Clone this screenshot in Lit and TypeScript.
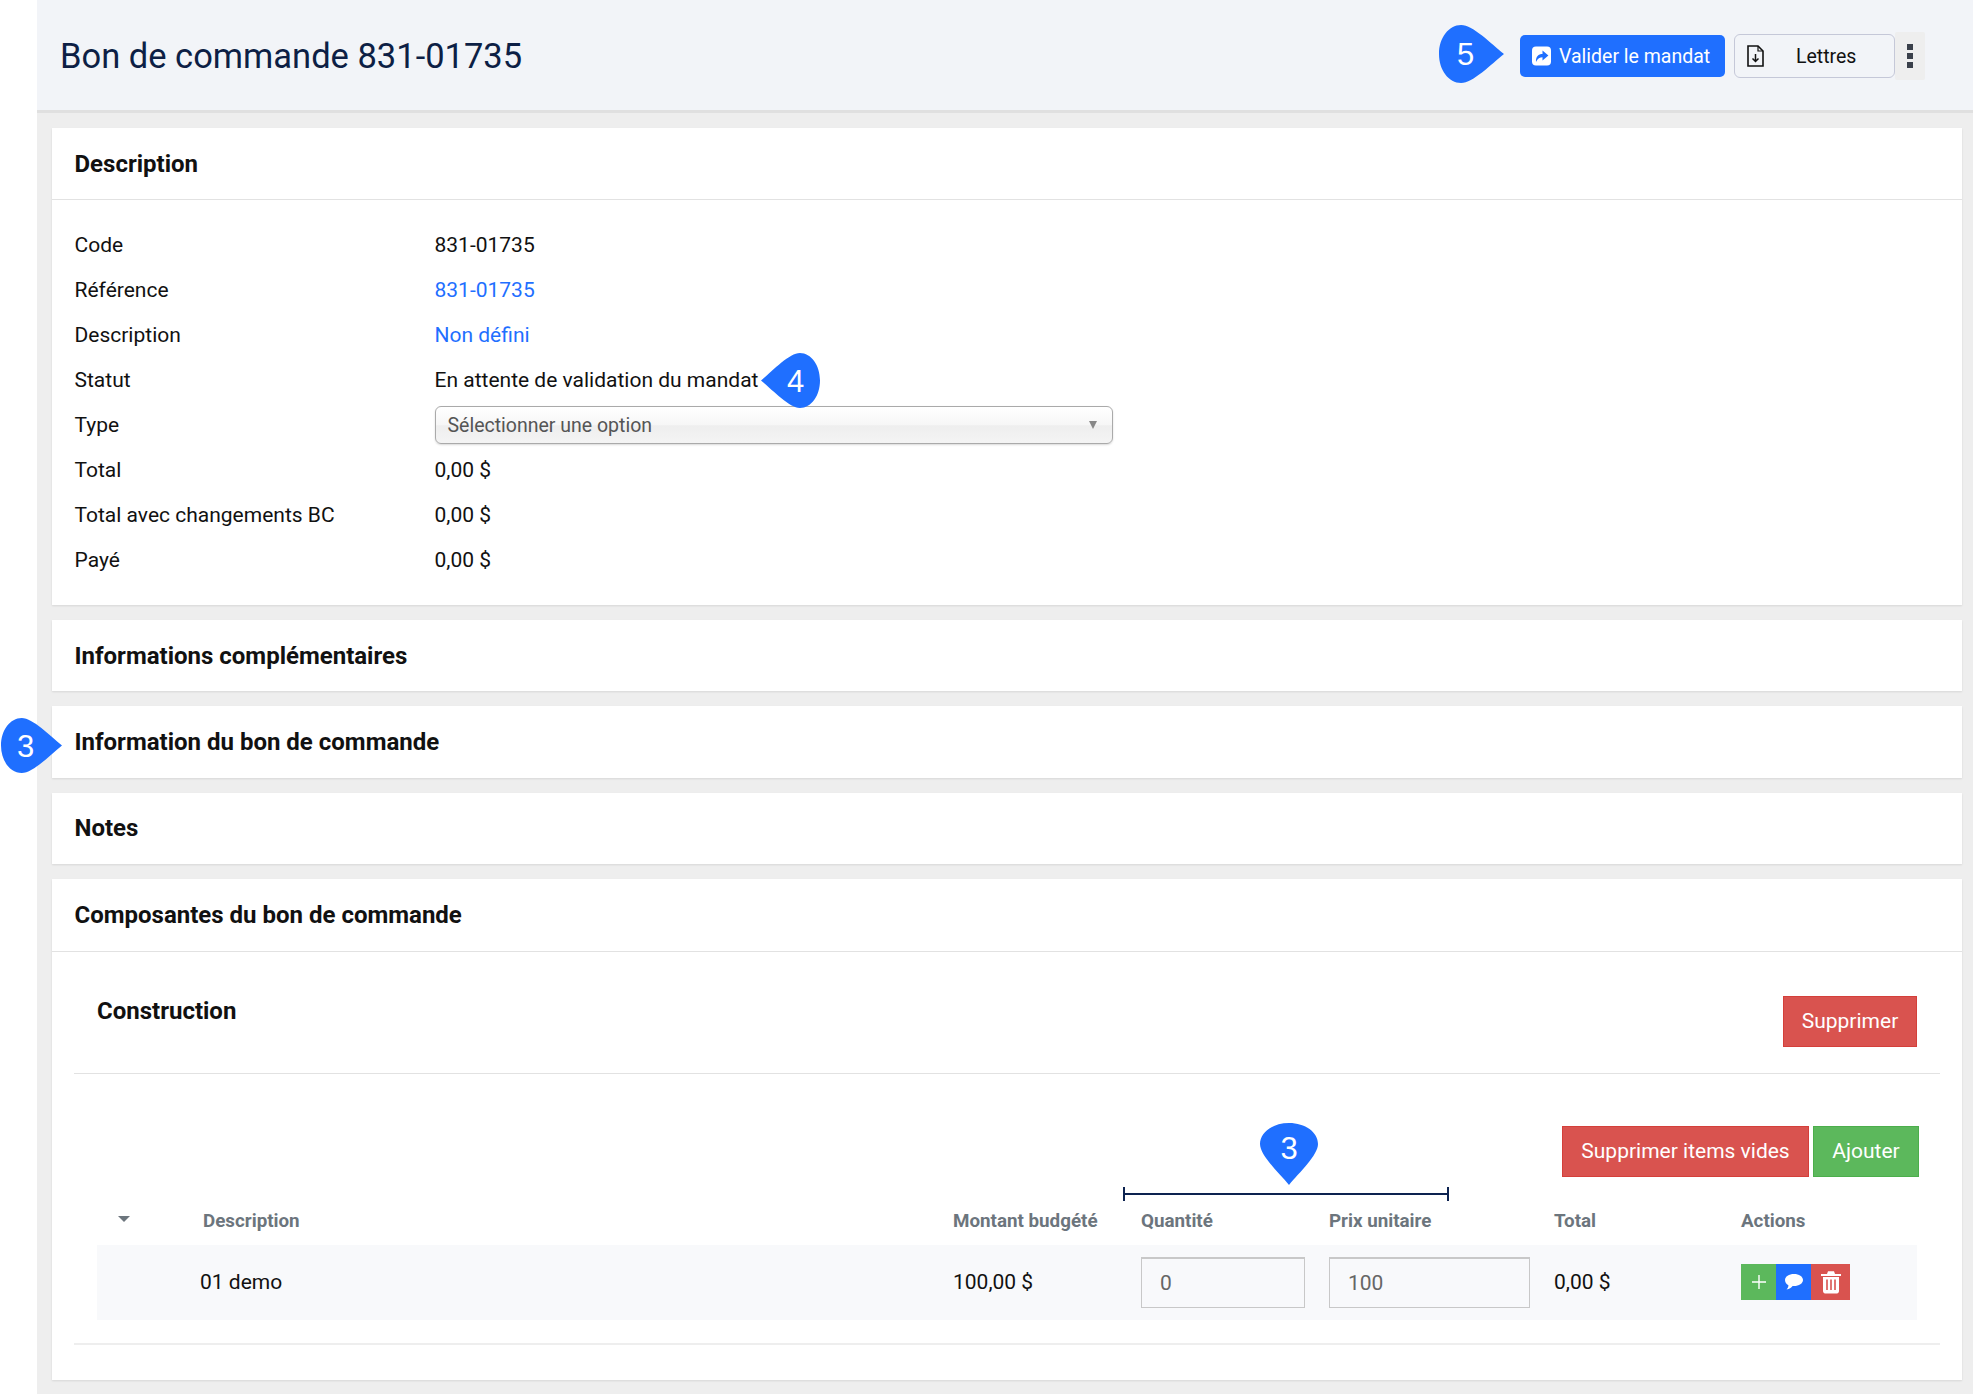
import { LitElement, html, css, svg } from 'lit';
import { customElement } from 'lit/decorators.js';

const DETAILS = [
  { label: 'Code', value: '831-01735' },
  { label: 'Référence', value: '831-01735', link: true },
  { label: 'Description', value: 'Non défini', link: true },
  { label: 'Statut', value: 'En attente de validation du mandat' },
  { label: 'Type', select: true },
  { label: 'Total', value: '0,00 $' },
  { label: 'Total avec changements BC', value: '0,00 $' },
  { label: 'Payé', value: '0,00 $' },
];

// teardrop marker, drawn pointing down and rotated for each annotation
const PIN_PATH = 'M50 0C78 0 100 15 100 34C100 52 68 80 50 100C32 80 0 52 0 34C0 15 22 0 50 0Z';

const pin = (cls: string, n: string, rotate: number) => html`
  <div class="pin ${cls}">
    <svg viewBox="0 0 100 100" preserveAspectRatio="none">
      ${svg`<path d=${PIN_PATH} transform="rotate(${rotate} 50 50)" fill="#1f6fff"></path>`}
    </svg>
    <span>${n}</span>
  </div>
`;

@customElement('app-root')
export class AppRoot extends LitElement {
  static styles = css`
    :host {
      display: block;
      position: relative;
      width: 1973px;
      height: 1394px;
      overflow: hidden;
      background: #fff;
      font-family: Roboto, 'Liberation Sans', sans-serif;
      font-size: 21px;
      color: #111;
    }

    .main {
      margin-left: 37px;
      height: 1394px;
      background: #eeeeee;
    }

    .topbar {
      display: flex;
      align-items: center;
      justify-content: space-between;
      height: 108px;
      padding: 2px 48px 0 23px;
      background: #f2f4f8;
      border-bottom: 3px solid #e0e0e0;
    }

    .topbar h1 {
      margin: 0;
      font-size: 34.5px;
      font-weight: 400;
      color: #0d1f45;
    }

    .top-actions {
      display: flex;
      align-items: center;
      font-size: 19.5px;
    }

    .btn-validate {
      display: flex;
      align-items: center;
      gap: 8px;
      width: 205px;
      height: 42px;
      box-sizing: border-box;
      padding-left: 12px;
      margin-right: 9px;
      border-radius: 5px;
      background: #1f6fff;
      color: #fff;
      white-space: nowrap;
    }

    .btn-letters {
      display: flex;
      align-items: center;
      width: 161px;
      height: 44px;
      box-sizing: border-box;
      padding-left: 11px;
      border: 1px solid #c5c8d8;
      border-radius: 6px;
      color: #111;
    }

    .btn-letters span {
      margin-left: 31px;
    }

    .btn-more {
      display: flex;
      flex-direction: column;
      align-items: center;
      justify-content: center;
      gap: 3px;
      width: 30px;
      height: 48px;
      background: #eeeeee;
      border-radius: 2px;
    }

    .btn-more i {
      width: 6px;
      height: 6px;
      background: #3a3f4a;
    }

    .content {
      display: flex;
      flex-direction: column;
      gap: 15px;
      padding: 15px 11px 0 15px;
    }

    .card {
      background: #fff;
      box-shadow: 0 1px 2px rgba(0, 0, 0, 0.1);
    }

    .card-title {
      display: flex;
      align-items: center;
      height: 71.4px;
      padding-left: 22.5px;
      font-size: 24px;
      font-weight: 700;
      color: #111;
    }

    .card-title.ruled {
      border-bottom: 1px solid #e2e2e2;
    }

    .details {
      padding: 22px 22.5px 22.6px;
    }

    .detail {
      display: grid;
      grid-template-columns: 360px 678px;
      align-items: center;
      height: 45px;
    }

    .link {
      color: #1f6fff;
    }

    .select {
      display: flex;
      align-items: center;
      justify-content: space-between;
      height: 38px;
      margin-top: 1px;
      box-sizing: border-box;
      padding: 0 15px 0 12px;
      border: 1px solid #aaa;
      border-radius: 6px;
      background: linear-gradient(#ffffff 0%, #f6f6f6 50%, #eeeeee 52%, #f4f4f4 100%);
      box-shadow: 0 1px 2px rgba(0, 0, 0, 0.15);
      font-size: 19.5px;
      color: #555;
    }

    .select i {
      width: 0;
      height: 0;
      border-left: 4.5px solid transparent;
      border-right: 4.5px solid transparent;
      border-top: 8px solid #888;
    }

    .components {
      padding: 0 22px;
    }

    .group-head {
      display: flex;
      justify-content: space-between;
      align-items: flex-start;
      padding: 44px 23px 26px 23px;
      border-bottom: 1px solid #e2e2e2;
    }

    .group-head h2 {
      margin: 0;
      font-size: 24px;
      font-weight: 700;
      line-height: 30px;
    }

    .btn {
      display: flex;
      align-items: center;
      justify-content: center;
      height: 51px;
      box-sizing: border-box;
      color: #fff;
      white-space: nowrap;
    }

    .btn.red {
      background: #d9534f;
      border: 1px solid #d43f3a;
    }

    .btn.green {
      background: #5cb85c;
      border: 1px solid #4cae4c;
    }

    .btn.delete {
      width: 134px;
    }

    .group-body {
      padding: 52px 23px 23px 23px;
      border-bottom: 2px solid #eeeeee;
    }

    .table-actions {
      display: flex;
      justify-content: flex-end;
      gap: 4px;
      margin-right: -2px;
    }

    .table-actions .wide {
      width: 247px;
    }

    .table-actions .narrow {
      width: 106px;
    }

    .thead,
    .row {
      display: grid;
      grid-template-columns: 103px 753px 188px 188px 225px 187px 176px;
      align-items: center;
    }

    .thead {
      height: 68px;
      padding-top: 20px;
      box-sizing: border-box;
      font-size: 18.8px;
      font-weight: 700;
      color: #6c757d;
    }

    .thead .desc {
      padding-left: 3px;
    }

    .caret {
      width: 0;
      height: 0;
      margin: 0 0 3px 21px;
      border-left: 6px solid transparent;
      border-right: 6px solid transparent;
      border-top: 6px solid #6c757d;
    }

    .row {
      height: 75px;
      background: #f8f9fb;
    }

    .field {
      display: flex;
      align-items: center;
      width: calc(100% - 24px);
      height: 51px;
      box-sizing: border-box;
      padding-left: 18px;
      border: 1px solid #c8c8c8;
      border-top-width: 2px;
      color: #666;
    }

    .row-actions {
      display: flex;
      height: 36px;
    }

    .row-actions div {
      display: flex;
      align-items: center;
      justify-content: center;
      width: 35px;
    }

    .row-actions .add {
      background: #5cb85c;
    }

    .row-actions .chat {
      background: #1f6fff;
    }

    .row-actions .trash {
      width: 39px;
      background: #d9534f;
    }

    .foot {
      height: 35px;
    }

    /* annotations sitting on top of the page */
    .pin {
      position: absolute;
      display: flex;
      align-items: center;
      justify-content: center;
      font-family: 'Liberation Sans', Arial, sans-serif;
      font-size: 31px;
      color: #fff;
    }

    .pin svg {
      position: absolute;
      inset: 0;
      width: 100%;
      height: 100%;
    }

    .pin span {
      position: relative;
    }

    .pin-5 {
      left: 1439px;
      top: 25px;
      width: 65px;
      height: 58px;
    }

    .pin-5 span {
      left: -6px;
      top: 1px;
    }

    .pin-4 {
      left: 761px;
      top: 353px;
      width: 59px;
      height: 55px;
    }

    .pin-4 span {
      left: 5px;
      top: 1px;
    }

    .pin-3a {
      left: 1px;
      top: 718px;
      width: 61px;
      height: 55px;
    }

    .pin-3a span {
      left: -6px;
      top: 1px;
    }

    .pin-3b {
      left: 1260px;
      top: 1123px;
      width: 58px;
      height: 62px;
    }

    .pin-3b span {
      top: -5px;
    }

    .bracket {
      position: absolute;
      left: 1123px;
      top: 1187px;
      width: 326px;
      height: 14px;
      box-sizing: border-box;
      border-left: 2px solid #0d2350;
      border-right: 2px solid #0d2350;
    }

    .bracket::after {
      content: '';
      position: absolute;
      left: 0;
      right: 0;
      top: 6px;
      height: 2px;
      background: #0d2350;
    }
  `;

  private renderValue(d: (typeof DETAILS)[number]) {
    if (d.select) {
      return html`<div class="select">Sélectionner une option<i></i></div>`;
    }
    return html`<div class=${d.link ? 'link' : ''}>${d.value}</div>`;
  }

  render() {
    return html`
      <div class="main">
        <header class="topbar">
          <h1>Bon de commande 831-01735</h1>
          <div class="top-actions">
            <div class="btn-validate">
              <svg width="19" height="20" viewBox="0 0 19 20">
                <rect y="0.5" width="19" height="19" rx="4" fill="#fff"></rect>
                <path d="M4 16C3.6 10.5 6.5 8 10.5 8V4.6L16.4 9.6L10.5 14.6V11.2C8 11.2 5.5 12.6 4 16Z" fill="#1f6fff"></path>
              </svg>
              Valider le mandat
            </div>
            <div class="btn-letters">
              <svg width="19" height="22" viewBox="0 0 19 22" fill="none" stroke="#111" stroke-width="1.6">
                <path d="M2 1H12L17 6V21H2Z"></path>
                <path d="M12 1V6H17" stroke-width="1.2"></path>
                <path d="M9.5 9V16M6.5 13.5L9.5 16.5L12.5 13.5" stroke-width="1.5"></path>
              </svg>
              <span>Lettres</span>
            </div>
            <div class="btn-more"><i></i><i></i><i></i></div>
          </div>
        </header>

        <div class="content">
          <section class="card">
            <div class="card-title ruled">Description</div>
            <div class="details">
              ${DETAILS.map(
                (d) => html`<div class="detail"><div>${d.label}</div>${this.renderValue(d)}</div>`
              )}
            </div>
          </section>

          <section class="card"><div class="card-title">Informations complémentaires</div></section>
          <section class="card"><div class="card-title">Information du bon de commande</div></section>
          <section class="card"><div class="card-title">Notes</div></section>

          <section class="card">
            <div class="card-title ruled">Composantes du bon de commande</div>
            <div class="components">
              <div class="group-head">
                <h2>Construction</h2>
                <div class="btn red delete">Supprimer</div>
              </div>
              <div class="group-body">
                <div class="table-actions">
                  <div class="btn red wide">Supprimer items vides</div>
                  <div class="btn green narrow">Ajouter</div>
                </div>
                <div class="thead">
                  <div><div class="caret"></div></div>
                  <div class="desc">Description</div>
                  <div>Montant budgété</div>
                  <div>Quantité</div>
                  <div>Prix unitaire</div>
                  <div>Total</div>
                  <div>Actions</div>
                </div>
                <div class="row">
                  <div></div>
                  <div>01 demo</div>
                  <div>100,00 $</div>
                  <div><div class="field">0</div></div>
                  <div><div class="field">100</div></div>
                  <div>0,00 $</div>
                  <div class="row-actions">
                    <div class="add">
                      <svg width="16" height="16" viewBox="0 0 16 16" stroke="#fff" stroke-width="1.4">
                        <path d="M8 1V15M1 8H15"></path>
                      </svg>
                    </div>
                    <div class="chat">
                      <svg width="20" height="18" viewBox="0 0 20 18">
                        <path d="M10 1C15 1 19 3.6 19 7C19 10.4 15 13 10 13L8.6 13C7.2 14.8 5.4 16 2.6 16.4C3.8 15.2 4.4 13.8 4.4 12.2C2.2 11.2 1 9.2 1 7C1 3.6 5 1 10 1Z" fill="#fff"></path>
                      </svg>
                    </div>
                    <div class="trash">
                      <svg width="22" height="24" viewBox="0 0 22 24">
                        <path d="M7 4L8 1.2H14L15 4H21V6H1V4Z" fill="#fff"></path>
                        <path d="M3 7H19V21C19 22.4 18 23.4 17 23.4H5C4 23.4 3 22.4 3 21Z" fill="#fff"></path>
                        <path d="M7 9.5V20M11 9.5V20M15 9.5V20" stroke="#d9534f" stroke-width="1.6"></path>
                      </svg>
                    </div>
                  </div>
                </div>
              </div>
            </div>
            <div class="foot"></div>
          </section>
        </div>
      </div>

      ${pin('pin-5', '5', -90)}
      ${pin('pin-4', '4', 90)}
      ${pin('pin-3a', '3', -90)}
      ${pin('pin-3b', '3', 0)}
      <div class="bracket"></div>
    `;
  }
}

declare global {
  interface HTMLElementTagNameMap {
    'app-root': AppRoot;
  }
}
